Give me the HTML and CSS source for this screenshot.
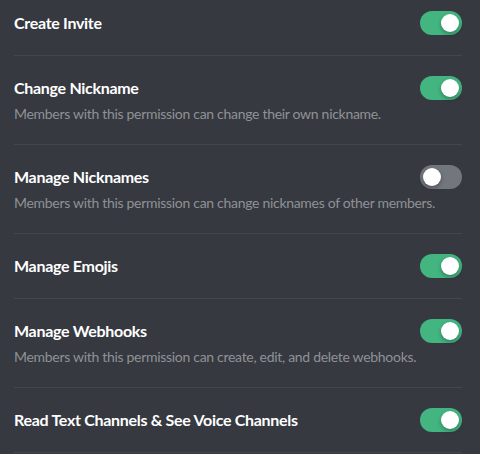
FILE: index.html
```html
<!DOCTYPE html>
<html>
<head>
<meta charset="utf-8">
<link rel="stylesheet" href="styles.css">
</head>
<body>
<div class="list">
  <div class="row first">
    <div class="head"><span class="title">Create Invite</span><span class="switch on"><span class="knob"></span></span></div>
  </div>
  <div class="row">
    <div class="head"><span class="title">Change Nickname</span><span class="switch on"><span class="knob"></span></span></div>
    <div class="desc">Members with this permission can change their own nickname.</div>
  </div>
  <div class="row">
    <div class="head"><span class="title">Manage Nicknames</span><span class="switch"><span class="knob"></span></span></div>
    <div class="desc">Members with this permission can change nicknames of other members.</div>
  </div>
  <div class="row">
    <div class="head"><span class="title">Manage Emojis</span><span class="switch on"><span class="knob"></span></span></div>
  </div>
  <div class="row">
    <div class="head"><span class="title">Manage Webhooks</span><span class="switch on"><span class="knob"></span></span></div>
    <div class="desc">Members with this permission can create, edit, and delete webhooks.</div>
  </div>
  <div class="row">
    <div class="head"><span class="title">Read Text Channels &amp; See Voice Channels</span><span class="switch on"><span class="knob"></span></span></div>
  </div>
</div>
</body>
</html>
```
FILE: styles.css
```css
html, body {
  margin: 0;
  background: #36393f;
  height: 100%;
}
body {
  font-family: Lato, "Noto Sans", sans-serif;
  overflow: hidden;
}
.list {
  padding: 0 18px 0 14px;
}
.row {
  padding: 20px 0;
  border-bottom: 1px solid #43464c;
}
.row.first {
  padding-top: 11px;
}
.head {
  display: flex;
  align-items: center;
  justify-content: space-between;
  height: 24px;
}
.title {
  color: #ffffff;
  font-size: 16px;
  font-weight: 700;
  letter-spacing: -0.3px;
  position: relative;
  top: -1px;
}
.desc {
  margin-top: 4px;
  color: #8e9297;
  font-size: 14px;
  line-height: 20px;
  letter-spacing: -0.3px;
}
.switch {
  width: 42px;
  height: 24px;
  border-radius: 12px;
  background: #72767d;
  display: flex;
  align-items: center;
  padding: 0 3px;
  box-sizing: border-box;
  flex: none;
}
.switch.on {
  background: #43b581;
  justify-content: flex-end;
}
.knob {
  width: 18px;
  height: 18px;
  border-radius: 50%;
  background: #fff;
  box-shadow: 0 2px 4px rgba(0,0,0,0.3);
}
```
